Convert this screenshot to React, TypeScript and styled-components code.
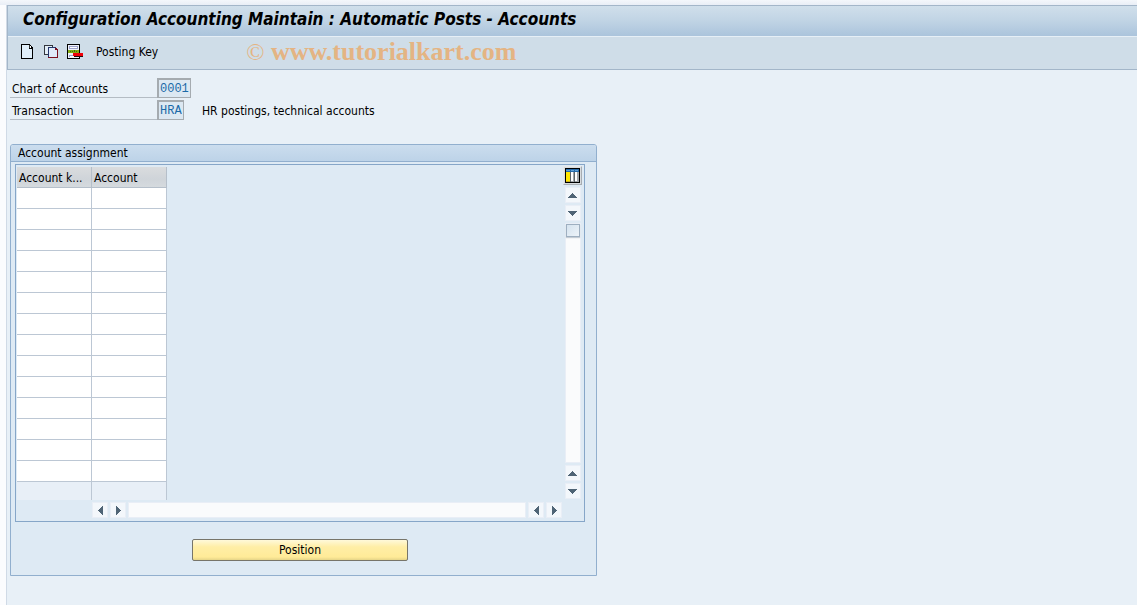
import React from "react";
import styled, { createGlobalStyle } from "styled-components";

const GlobalStyle = createGlobalStyle`
  * { box-sizing: border-box; }
  body {
    margin: 0;
    background: #fbfcfe;
    color: #000;
    font: 12px/16px "DejaVu Sans Condensed", "DejaVu Sans", sans-serif;
  }
  button, input { font: inherit; color: inherit; margin: 0; padding: 0; border-radius: 0; }
`;

const Page = styled.div`
  min-height: 100vh;
  padding: 5px 0 0 6px;
  background: linear-gradient(#f4f7fb, #e9eef6) top / 100% 5px no-repeat;
`;

const Screen = styled.main`
  min-height: calc(100vh - 5px);
  border-left: 1px solid #d0dae6;
  background: #e8f0f7;
`;

const Header = styled.header`
  border: solid #a3b6c9;
  border-width: 1px 0 1px 1px;
  background: #cfdde8;
`;

const Title = styled.h1`
  margin: 0;
  height: 31px;
  padding: 2px 15px;
  border-bottom: 1px solid #e6eff6;
  background: linear-gradient(#d0dfeb, #c2d5e5 45%, #abc4dc);
  font-size: 17px;
  line-height: 22px;
  font-weight: bold;
  font-style: italic;
  white-space: nowrap;
`;

const Toolbar = styled.div`
  display: flex;
  align-items: center;
  height: 32px;
  padding: 0 0 2px 11px;
  gap: 8px;
`;

const ToolButton = styled.button`
  display: flex;
  border: 0;
  background: none;
  white-space: nowrap;
`;

const TextTool = styled(ToolButton)`
  margin-left: 4px;
`;

const Watermark = styled.span`
  margin-left: 80px;
  color: #e4b483;
  font: bold 26px/30px "Liberation Serif", serif;
  white-space: nowrap;
`;

const Copyright = styled.span`
  font-weight: normal;
  font-size: 24px;
`;

const Form = styled.form`
  display: grid;
  gap: 2px;
  padding: 8px 3px 0;
`;

const Field = styled.div`
  display: flex;
  height: 20px;
`;

const FieldLabel = styled.label`
  width: 147px;
  padding: 3px 0 0 2px;
  border-bottom: 1px solid #b4bcc4;
`;

const Code = styled.input<{ $chars: number }>`
  width: ${(p) => 6 + p.$chars * 7}px;
  padding: 0 1px;
  border: 2px solid #a5abb0;
  border-right-width: 1px;
  border-bottom-width: 1px;
  outline: 0;
  background: #dce8f2;
  color: #1b6aa8;
  font: 12px/16px "Liberation Mono", monospace;
`;

const Description = styled.span`
  padding: 3px 0 0 18px;
`;

const Group = styled.section`
  max-width: 587px;
  margin: 24px 3px 0;
  border: 1px solid #91afce;
  border-radius: 3px 3px 0 0;
  background: #deeaf4;
`;

const GroupTitle = styled.h2`
  margin: 0;
  height: 17px;
  padding-left: 7px;
  border-bottom: 1px solid #91afce;
  border-radius: 2px 2px 0 0;
  background: linear-gradient(#cbddee, #bdd3e8);
  font-size: 12px;
  line-height: 16px;
  font-weight: normal;
`;

const TableControl = styled.div`
  display: grid;
  grid-template-columns: 1fr 19px;
  margin: 2px 11px 0 4px;
  padding: 1px 2px 3px 1px;
  border: 1px solid #86a6c8;
  background: #deeaf4;
`;

const Grid = styled.table`
  width: 150px;
  margin-top: 1px;
  table-layout: fixed;
  border-collapse: separate;
  border-spacing: 0;
`;

const HeadCell = styled.th`
  height: 21px;
  padding: 2px 0 0 2px;
  border: solid #b5bfca;
  border-width: 0 1px 1px 0;
  background: linear-gradient(#dadcde, #cfd4d9 60%, #d5dade);
  font-weight: normal;
  text-align: left;
  white-space: nowrap;
`;

const Cell = styled.td<{ $cut?: boolean }>`
  height: ${(p) => (p.$cut ? 18 : 21)}px;
  padding: 0;
  border: solid #bcc7d4;
  border-width: ${(p) => (p.$cut ? "0 1px 0 0" : "0 1px 1px 0")};
  background: ${(p) => (p.$cut ? "#e8eff7" : "#fff")};
`;

const CellInput = styled.input`
  display: block;
  width: 100%;
  height: 20px;
  padding: 0 2px;
  border: 0;
  outline: 0;
  background: transparent;
`;

const VerticalBar = styled.div`
  display: flex;
  flex-direction: column;
  align-items: center;
  gap: 2px;
  padding-bottom: 1px;
`;

const HorizontalBar = styled.div`
  display: flex;
  gap: 2px;
  padding: 2px 1px 0 75px;
`;

const Settings = styled.button`
  display: flex;
  width: 19px;
  height: 19px;
  padding: 1px;
  border: 1px solid #e6e8ea;
  border-right-color: #a8adb2;
  border-bottom-color: #a8adb2;
  background: #d8dcdf;
`;

const Arrow = styled.button`
  display: flex;
  align-items: center;
  justify-content: center;
  flex: none;
  width: 16px;
  height: 16px;
  border: 1px solid #e9eef6;
  background: #f3f7fb;
`;

const Track = styled.div<{ $vertical?: boolean }>`
  flex: 1;
  width: ${(p) => (p.$vertical ? "16px" : "auto")};
  border: 1px solid #e9eef6;
  background: #fafbfc;
`;

const Thumb = styled.div`
  width: 14px;
  height: 13px;
  border: 1px solid #9eafc0;
  background: linear-gradient(135deg, #d5e3ef, #edf3f8);
  box-shadow: 0 1px 1px #c4ccd4;
`;

const Footer = styled.div`
  display: flex;
  padding: 17px 0 14px 181px;
`;

const Position = styled.button`
  width: 216px;
  height: 22px;
  border: 1px solid #77756a;
  border-radius: 2px;
  background: linear-gradient(#fff9da, #ffeea6 35%, #ffeb98 85%, #e5d487);
`;

const arrows = {
  up: "M4 0h1v1h1v1h1v1h1v1h1v1H0V4h1V3h1V2h1V1h1z",
  down: "M0 0h9v1H8v1H7v1H6v1H5v1H4V4H3V3H2V2H1V1H0z",
  left: "M4 0h1v9H4V8H3V7H2V6H1V5H0V4h1V3h1V2h1V1h1z",
  right: "M0 0h1v1h1v1h1v1h1v1h1v1H4v1H3v1H2v1H1v1H0z",
};

type Direction = keyof typeof arrows;

function ScrollButton({ direction }: { direction: Direction }) {
  const flat = direction === "up" || direction === "down";
  return (
    <Arrow type="button" aria-label={`Scroll ${direction}`}>
      <svg width={flat ? 9 : 5} height={flat ? 5 : 9} fill="#4f6475" shapeRendering="crispEdges">
        <path d={arrows[direction]} />
      </svg>
    </Arrow>
  );
}

function NewIcon() {
  return (
    <svg width="16" height="16" viewBox="0 0 16 16" shapeRendering="crispEdges">
      <path d="M2 0h9v1h1v1h1v1h1v12H2z" fill="#000" />
      <path d="M3 1h7v4h3v9H3z" fill="#e1effa" />
      <path d="M10 1h1v3h-1z" fill="#333" />
      <path d="M11 2h1v2h-1z" fill="#fff" />
    </svg>
  );
}

function CopyIcon() {
  return (
    <svg width="16" height="16" viewBox="0 0 16 16" shapeRendering="crispEdges">
      <path d="M1 1h9v10H1z" fill="#33373f" />
      <path d="M2 2h7v8H2z" fill="#e3eef7" />
      <path d="M5 3h8v1h1v1h1v9H5z" fill="#7b1020" />
      <path d="M5 3h8v1H6v9H5z" fill="#26366d" />
      <path d="M6 4h6v2h2v7H6z" fill="#dfebfa" />
    </svg>
  );
}

function DeleteRowIcon() {
  return (
    <svg width="17" height="16" viewBox="0 0 17 16" shapeRendering="crispEdges">
      <path d="M0 0h13v15H0z" fill="#000" />
      <path d="M1 1h11v13H1z" fill="#eff2f9" />
      <path d="M2 2h9v3H2zM2 11h9v2H2z" fill="#9ea2cc" />
      <path d="M3 3h7v1H3zM3 12h7v1H3z" fill="#fff" />
      <path d="M1 6h11v3H1z" fill="#85ad13" />
      <path d="M3 7h1v1H3zM5 7h1v1H5zM7 6h1v2H7zM9 7h1v1H9z" fill="#426a10" />
      <path d="M6 9h10v3H6z" fill="#f00008" />
      <path d="M7 12h9v1H7z" fill="#250b0b" />
    </svg>
  );
}

function ColumnsIcon() {
  return (
    <svg width="15" height="15" viewBox="0 0 15 15" shapeRendering="crispEdges">
      <path d="M0 0h15v15H0z" fill="#000" />
      <path d="M1 1h13v3H1z" fill="#2569a9" />
      <path d="M1 2h4v1H1zM6 2h3v1H6zM10 2h3v1h-3z" fill="#5e9fd5" />
      <path d="M1 4h4v9H1z" fill="#ffe600" />
      <path d="M1 13h4v1H1z" fill="#c9ae20" />
      <path d="M5 4h9v10H5z" fill="#a2a6aa" />
      <path d="M6 4h2v9H6zM10 4h2v9h-2z" fill="#fff" />
      <path d="M5 4h1v10H5zM9 4h1v10H9z" fill="#5f6569" />
    </svg>
  );
}

const ROWS = 14;

export default function App() {
  return (
    <>
      <GlobalStyle />
      <Page>
        <Screen>
          <Header>
            <Title>Configuration Accounting Maintain : Automatic Posts - Accounts</Title>
            <Toolbar>
              <ToolButton type="button" aria-label="New"><NewIcon /></ToolButton>
              <ToolButton type="button" aria-label="Copy"><CopyIcon /></ToolButton>
              <ToolButton type="button" aria-label="Delete row"><DeleteRowIcon /></ToolButton>
              <TextTool type="button">Posting Key</TextTool>
              <Watermark><Copyright>©</Copyright> www.tutorialkart.com</Watermark>
            </Toolbar>
          </Header>
          <Form>
            <Field>
              <FieldLabel htmlFor="chart">Chart of Accounts</FieldLabel>
              <Code id="chart" $chars={4} defaultValue="0001" />
            </Field>
            <Field>
              <FieldLabel htmlFor="transaction">Transaction</FieldLabel>
              <Code id="transaction" $chars={3} defaultValue="HRA" />
              <Description>HR postings, technical accounts</Description>
            </Field>
          </Form>
          <Group>
            <GroupTitle>Account assignment</GroupTitle>
            <TableControl>
              <Grid>
                <thead>
                  <tr>
                    <HeadCell>Account k...</HeadCell>
                    <HeadCell>Account</HeadCell>
                  </tr>
                </thead>
                <tbody>
                  {Array.from({ length: ROWS }, (_, i) => (
                    <tr key={i}>
                      <Cell><CellInput aria-label={`Account key ${i + 1}`} /></Cell>
                      <Cell><CellInput aria-label={`Account ${i + 1}`} /></Cell>
                    </tr>
                  ))}
                  <tr>
                    <Cell $cut />
                    <Cell $cut />
                  </tr>
                </tbody>
              </Grid>
              <VerticalBar>
                <Settings type="button" aria-label="Table settings"><ColumnsIcon /></Settings>
                <ScrollButton direction="up" />
                <ScrollButton direction="down" />
                <Track $vertical><Thumb /></Track>
                <ScrollButton direction="up" />
                <ScrollButton direction="down" />
              </VerticalBar>
              <HorizontalBar>
                <ScrollButton direction="left" />
                <ScrollButton direction="right" />
                <Track />
                <ScrollButton direction="left" />
                <ScrollButton direction="right" />
              </HorizontalBar>
            </TableControl>
            <Footer>
              <Position type="button">Position</Position>
            </Footer>
          </Group>
        </Screen>
      </Page>
    </>
  );
}
